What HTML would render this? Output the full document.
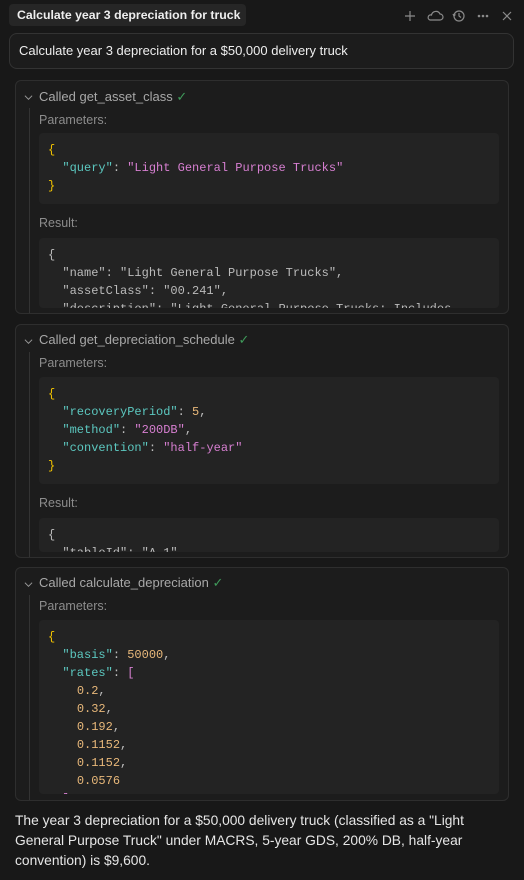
<!DOCTYPE html>
<html><head><style>
*{margin:0;padding:0;box-sizing:border-box}
body{width:524px;height:880px;background:#181818;font-family:"Liberation Sans",sans-serif;color:#e6e6e6;position:relative;overflow:hidden}
.abs{position:absolute}
.pill{left:9px;top:4px;width:237px;height:22px;background:#262626;border-radius:4px;font-size:12.3px;font-weight:bold;color:#eee;line-height:22px;padding-left:8px;white-space:nowrap;overflow:hidden}
.inp{left:9px;top:33px;width:505px;height:36px;border:1px solid #333;border-radius:8px;background:#1c1c1c;font-size:13px;line-height:34px;padding-left:9px;color:#eee}
.card{left:15px;width:494px;border:1px solid #2e2e2e;border-radius:6px;background:#1c1c1c;overflow:hidden}
.hd{position:absolute;left:23px;font-size:13px;color:#a8a8a8;line-height:16px}
.chev{position:absolute;left:7px;width:9px;height:9px}
.vl{position:absolute;left:13px;width:1px;background:#333}
.lbl{position:absolute;left:23px;font-size:12.5px;color:#8c8c8c}
.code{position:absolute;left:23px;width:460px;background:#232323;border-radius:4px;font-family:"Liberation Mono",monospace;font-size:12px;line-height:18px;padding:8px 0 0 9px;white-space:pre;overflow:hidden;color:#bdbdbd}
.k{color:#5cc8c0}.s{color:#d77fd1}.n{color:#e8b87a}.b{color:#f2c300}.g{color:#bbb}
.ck{color:#3f9a5a}
.ans{left:15px;top:811px;width:470px;font-size:13.8px;line-height:20px;color:#e6e6e6}
</style></head><body>
<div class="abs pill">Calculate year 3 depreciation for truck</div>
<svg class="abs" style="left:400px;top:6px" width="120" height="20" viewBox="0 0 120 20" fill="none" stroke="#8a8a8a" stroke-width="1.2">
<path d="M10 5v10M5 10h10"/>
<path d="M30 14h10a3 3 0 0 0 0-6 4.5 4.5 0 0 0-8.5 1A2.5 2.5 0 0 0 30 14z"/>
<circle cx="59" cy="10" r="5"/><path d="M59 7v3l2 1.5M53 8l1 2 1.5-1.5"/>
<circle cx="79" cy="10" r=".7" fill="#8a8a8a"/><circle cx="83" cy="10" r=".7" fill="#8a8a8a"/><circle cx="87" cy="10" r=".7" fill="#8a8a8a"/>
<path d="M103 6l8 8M111 6l-8 8"/>
</svg>
<div class="abs inp">Calculate year 3 depreciation for a $50,000 delivery truck</div>

<div class="abs card" style="top:80px;height:234px">
<svg class="chev" style="top:12px;left:8px" viewBox="0 0 10 10" fill="none" stroke="#999" stroke-width="1.1"><path d="M1 3l4 4 4-4"/></svg>
<div class="hd" style="top:8px">Called get_asset_class <span class="ck">✓</span></div>
<div class="vl" style="top:27px;height:210px"></div>
<div class="lbl" style="top:32px">Parameters:</div>
<div class="code" style="top:52px;height:71px"><span class="b">{</span>
  <span class="k">"query"</span>: <span class="s">"Light General Purpose Trucks"</span>
<span class="b">}</span></div>
<div class="lbl" style="top:135px">Result:</div>
<div class="code g" style="top:157px;height:70px">{
  "name": "Light General Purpose Trucks",
  "assetClass": "00.241",
  "description": "Light General Purpose Trucks: Includes</div>
</div>

<div class="abs card" style="top:324px;height:234px">
<svg class="chev" style="top:12px;left:8px" viewBox="0 0 10 10" fill="none" stroke="#999" stroke-width="1.1"><path d="M1 3l4 4 4-4"/></svg>
<div class="hd" style="top:7px">Called get_depreciation_schedule <span class="ck">✓</span></div>
<div class="vl" style="top:27px;height:210px"></div>
<div class="lbl" style="top:31px">Parameters:</div>
<div class="code" style="top:52px;height:107px"><span class="b">{</span>
  <span class="k">"recoveryPeriod"</span>: <span class="n">5</span>,
  <span class="k">"method"</span>: <span class="s">"200DB"</span>,
  <span class="k">"convention"</span>: <span class="s">"half-year"</span>
<span class="b">}</span></div>
<div class="lbl" style="top:171px">Result:</div>
<div class="code g" style="top:193px;height:34px">{
  "tableId": "A-1",</div>
</div>

<div class="abs card" style="top:567px;height:234px">
<svg class="chev" style="top:12px;left:8px" viewBox="0 0 10 10" fill="none" stroke="#999" stroke-width="1.1"><path d="M1 3l4 4 4-4"/></svg>
<div class="hd" style="top:7px">Called calculate_depreciation <span class="ck">✓</span></div>
<div class="vl" style="top:27px;height:210px"></div>
<div class="lbl" style="top:31px">Parameters:</div>
<div class="code" style="top:52px;height:174px"><span class="b">{</span>
  <span class="k">"basis"</span>: <span class="n">50000</span>,
  <span class="k">"rates"</span>: <span class="s">[</span>
    <span class="n">0.2</span>,
    <span class="n">0.32</span>,
    <span class="n">0.192</span>,
    <span class="n">0.1152</span>,
    <span class="n">0.1152</span>,
    <span class="n">0.0576</span>
  <span class="s">]</span></div>
</div>

<div class="abs ans">The year 3 depreciation for a $50,000 delivery truck (classified as a "Light General Purpose Truck" under MACRS, 5-year GDS, 200% DB, half-year convention) is $9,600.</div>
</body></html>
